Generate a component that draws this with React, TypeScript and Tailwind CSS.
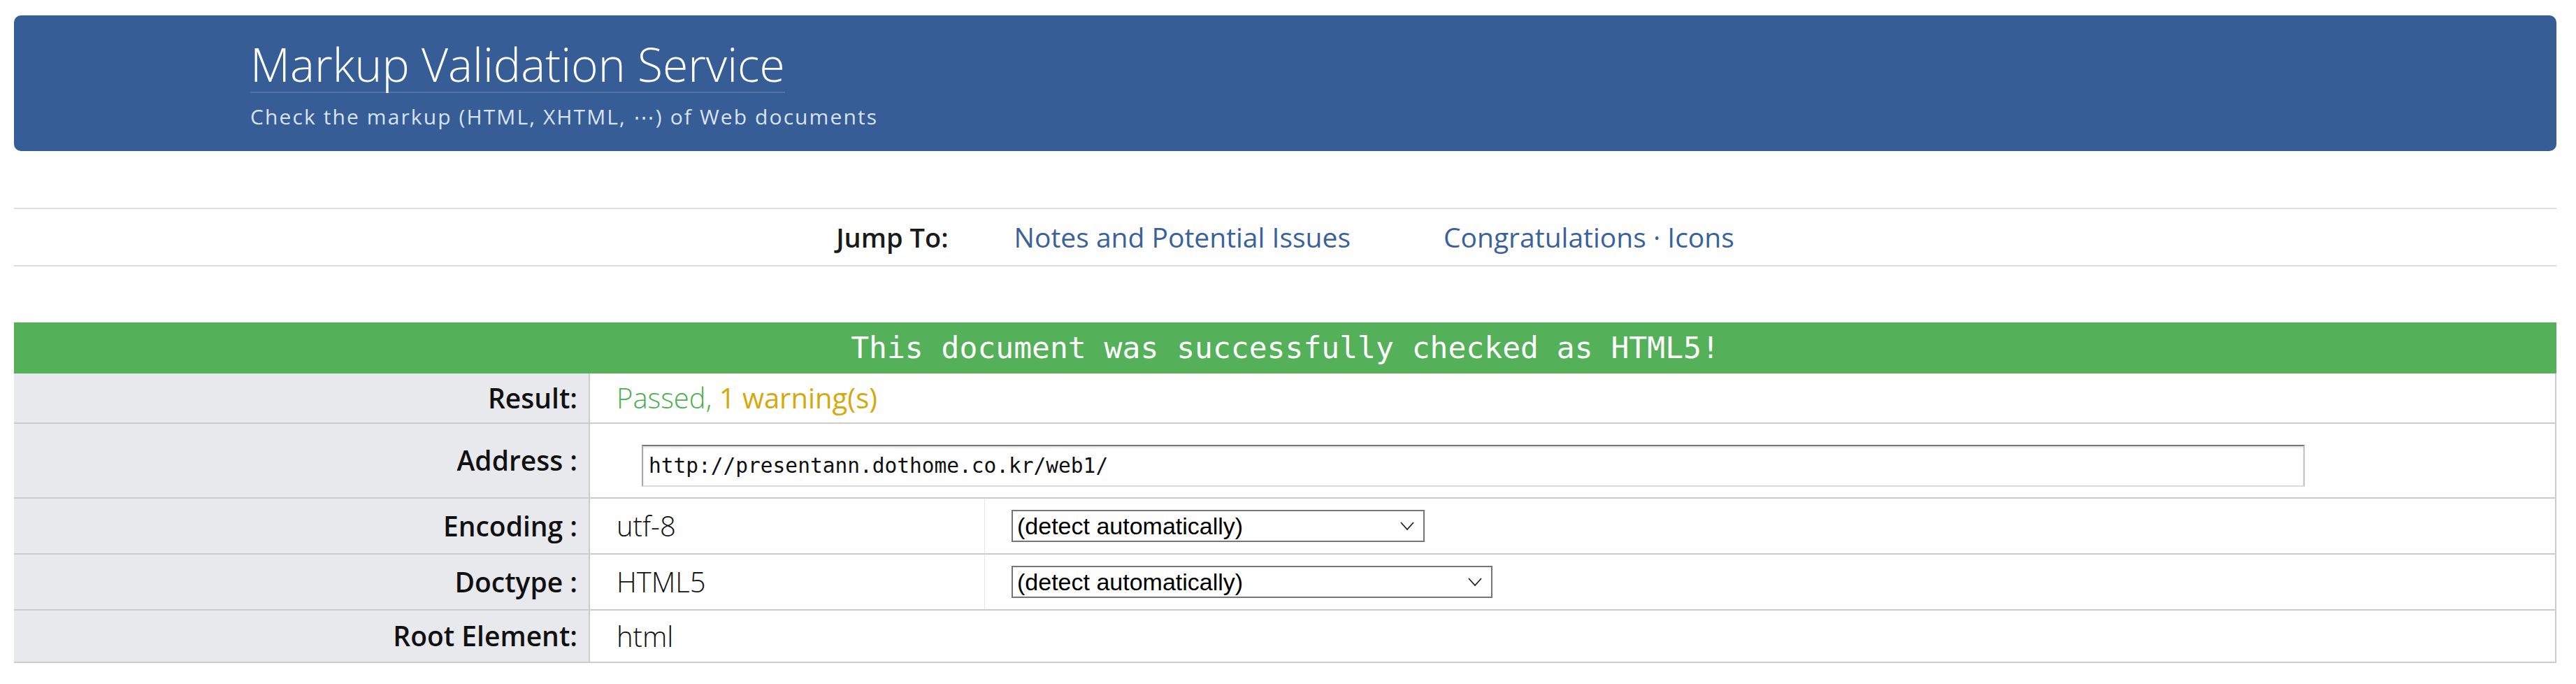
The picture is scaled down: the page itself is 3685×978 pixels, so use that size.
import React from "react";

const sans = "font-['Open_Sans','Noto_Sans',sans-serif]";
const mono = "font-['DejaVu_Sans_Mono','Liberation_Mono',monospace]";

function Chevron() {
  return (
    <svg width="20" height="12" viewBox="0 0 20 12" className="shrink-0">
      <polyline points="1,1 10,11 19,1" fill="none" stroke="#222" strokeWidth="1.8" />
    </svg>
  );
}

function FakeSelect({ width }: { width: string }) {
  return (
    <div
      className={`flex h-[46px] items-center justify-between border-2 border-[#767676] bg-white pl-[6px] pr-[13px] font-['Liberation_Sans',Arial,sans-serif] text-[34px] leading-none text-black ${width}`}
    >
      <span>(detect automatically)</span>
      <Chevron />
    </div>
  );
}

function Label({ children }: { children: React.ReactNode }) {
  return (
    <div className="flex w-[824px] shrink-0 items-center justify-end border-r-2 border-[#cccccc] bg-[#e8e9ed] pr-[16px] text-[39px] font-semibold text-[#111]">
      {children}
    </div>
  );
}

export default function App() {
  return (
    <div className={`min-h-[978px] w-full bg-white ${sans}`}>
      {/* Header */}
      <div className="ml-[20px] mr-[28px] mt-[22px] h-[194px] rounded-[10px] bg-[#365d96] pl-[338px] pt-[35px]">
        <div className="inline-block border-b-2 border-[#5273a6] pb-[6px] text-[66px] font-light leading-[68px] text-white">
          Markup Validation Service
        </div>
        <div className="mt-[19px] text-[30px] leading-[30px] tracking-[0.07em] text-[#d9e2f0]">
          Check the markup (HTML, XHTML, ⋯) of Web documents
        </div>
      </div>

      {/* Jump nav */}
      <div className="ml-[20px] mr-[28px] mt-[81px] flex h-[84px] items-center justify-center border-y-2 border-[#dedde2]">
        <span className="text-[38px] font-semibold text-[#1a1a1a]">Jump To:</span>
        <span className="ml-[94px] text-[39px] text-[#3a629a]">Notes and Potential Issues</span>
        <span className="ml-[133px] text-[39px] text-[#3a629a]">Congratulations · Icons</span>
      </div>

      {/* Result banner */}
      <div className={`ml-[20px] mr-[28px] mt-[80px] flex h-[73px] items-center justify-center bg-[#55b05a] text-[43px] text-white ${mono}`}>
        This document was successfully checked as HTML5!
      </div>

      {/* Table */}
      <div className="ml-[20px] mr-[28px] border-r-2 border-[#cccccc]">
        <div className="flex h-[72px] border-b-2 border-[#cccccc]">
          <Label>Result:</Label>
          <div className="flex flex-1 items-center pl-[38px] text-[40px]">
            <span className="font-light text-[#4cae4f]">Passed,&nbsp;</span>
            <span className="text-[#d4a90a]">1 warning(s)</span>
          </div>
        </div>

        <div className="flex h-[107px] border-b-2 border-[#cccccc]">
          <Label>Address :</Label>
          <div className="flex-1 pl-[74px] pt-[30px]">
            <div
              className={`flex h-[60px] w-[2379px] items-center border-2 border-t-[#767676] border-l-[#a8a8a8] border-r-[#c4c4c4] border-b-[#dcdcdc] bg-white pl-[8px] text-[29.5px] text-[#111] shadow-[inset_0_2px_3px_rgba(0,0,0,0.12)] ${mono}`}
            >
              http://presentann.dothome.co.kr/web1/
            </div>
          </div>
        </div>

        <div className="flex h-[80px] border-b-2 border-[#cccccc]">
          <Label>Encoding :</Label>
          <div className="flex w-[565px] items-center border-r border-[#e6e6e6] pl-[38px] text-[40px] font-light text-[#111]">
            utf-8
          </div>
          <div className="flex flex-1 items-center pl-[38px]">
            <FakeSelect width="w-[591px]" />
          </div>
        </div>

        <div className="flex h-[80px] border-b-2 border-[#cccccc]">
          <Label>Doctype :</Label>
          <div className="flex w-[565px] items-center border-r border-[#e6e6e6] pl-[38px] text-[40px] font-light text-[#111]">
            HTML5
          </div>
          <div className="flex flex-1 items-center pl-[38px]">
            <FakeSelect width="w-[688px]" />
          </div>
        </div>

        <div className="flex h-[75px] border-b-2 border-[#cccccc]">
          <Label>Root Element:</Label>
          <div className="flex flex-1 items-center pl-[38px] text-[40px] font-light text-[#111]">
            html
          </div>
        </div>
      </div>
    </div>
  );
}
